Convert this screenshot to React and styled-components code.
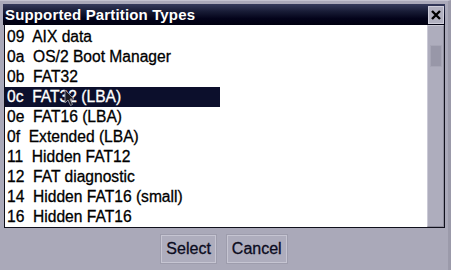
import React from "react";
import styled, { createGlobalStyle } from "styled-components";

const GlobalStyle = createGlobalStyle`
  html, body {
    margin: 0;
    padding: 0;
    background: #aaa9b9;
  }
  body {
    font-family: "Liberation Sans", Arial, sans-serif;
  }
`;

const TYPES = [
  { code: "09", name: "AIX data" },
  { code: "0a", name: "OS/2 Boot Manager" },
  { code: "0b", name: "FAT32" },
  { code: "0c", name: "FAT32 (LBA)" },
  { code: "0e", name: "FAT16 (LBA)" },
  { code: "0f", name: "Extended (LBA)" },
  { code: "11", name: "Hidden FAT12" },
  { code: "12", name: "FAT diagnostic" },
  { code: "14", name: "Hidden FAT16 (small)" },
  { code: "16", name: "Hidden FAT16" },
];

function Dialog() {
  const selected = "0c";
  return (
    <Window>
      <TitleBar>
        <Title>Supported Partition Types</Title>
        <CloseButton>
          <svg width="10" height="10" viewBox="0 0 10 10">
            <path d="M1 1 L9 9 M9 1 L1 9" stroke="#000" strokeWidth="2.4" />
          </svg>
        </CloseButton>
      </TitleBar>
      <ListBox>
        <Items>
          {TYPES.map((t) => (
            <Row key={t.code} $active={t.code === selected}>
              {t.code}  {t.name}
              {t.code === selected && (
                <Cursor width="12" height="18" viewBox="0 0 12 18">
                  <path
                    d="M1 1 L1 14 L4 11 L6.5 16.5 L8.5 15.5 L6 10 L10 10 Z"
                    fill="#1a1a22"
                    stroke="#8a8a96"
                    strokeWidth="1"
                  />
                </Cursor>
              )}
            </Row>
          ))}
        </Items>
        <ScrollTrack>
          <Thumb />
        </ScrollTrack>
      </ListBox>
      <Buttons>
        <Button>Select</Button>
        <Button>Cancel</Button>
      </Buttons>
    </Window>
  );
}

export default function App() {
  return (
    <>
      <GlobalStyle />
      <Dialog />
    </>
  );
}

const Window = styled.div`
  width: 451px;
  height: 270px;
  box-sizing: border-box;
  padding: 3px 3px 0 3px;
  background: #aaa9b9;
  border-top: 1px solid #c4c3d0;
  border-right: 3px solid #9b9aaa;
  display: flex;
  flex-direction: column;
`;

const TitleBar = styled.div`
  height: 21px;
  display: flex;
  align-items: center;
  justify-content: space-between;
  padding-left: 2px;
  background: linear-gradient(to bottom, #363b5c 0%, #181c36 35%, #03031a 70%, #000010 100%);
`;

const Title = styled.div`
  color: #ffffff;
  font-size: 15px;
  font-weight: bold;
  letter-spacing: 0.15px;
`;

const CloseButton = styled.div`
  width: 16px;
  height: 18px;
  margin-right: 1px;
  box-sizing: border-box;
  background: #b2b1c0;
  border: 1px solid #cfcedb;
  display: flex;
  align-items: center;
  justify-content: center;
`;

const ListBox = styled.div`
  height: 202px;
  margin-left: 1px;
  display: flex;
  background: #ffffff;
  border: 1px solid #10101c;
  border-top: none;
`;

const Items = styled.div`
  flex: 1;
  padding-top: 2px;
`;

const Row = styled.div`
  position: relative;
  height: 20px;
  width: 213px;
  line-height: 20px;
  padding-left: 2px;
  font-size: 15.6px;
  white-space: pre;
  -webkit-text-stroke: 0.3px currentColor;
  color: ${(p) => (p.$active ? "#ffffff" : "#000000")};
  background: ${(p) => (p.$active ? "#0c0f2c" : "transparent")};
`;

const Cursor = styled.svg`
  position: absolute;
  left: 59px;
  top: 2px;
`;

const ScrollTrack = styled.div`
  width: 17px;
  box-sizing: border-box;
  background: #aeadbd;
  border: 1px solid #cbcad6;
  border-right-color: #8e8d9c;
  border-bottom-color: #8e8d9c;
  padding: 19px 1px 0 2px;
`;

const Thumb = styled.div`
  height: 20px;
  background: #9897a8;
  border: 1px solid #a6a5b5;
`;

const Buttons = styled.div`
  display: flex;
  justify-content: center;
  gap: 11px;
  margin-top: 7px;
`;

const Button = styled.div`
  height: 28px;
  box-sizing: border-box;
  padding: 0 4px;
  display: flex;
  align-items: center;
  font-size: 16px;
  -webkit-text-stroke: 0.3px currentColor;
  color: #0b0b20;
  background: #aeadbd;
  border: 1px solid #c6c5d2;
  box-shadow: 0 0 0 1px #9e9dad;
`;
